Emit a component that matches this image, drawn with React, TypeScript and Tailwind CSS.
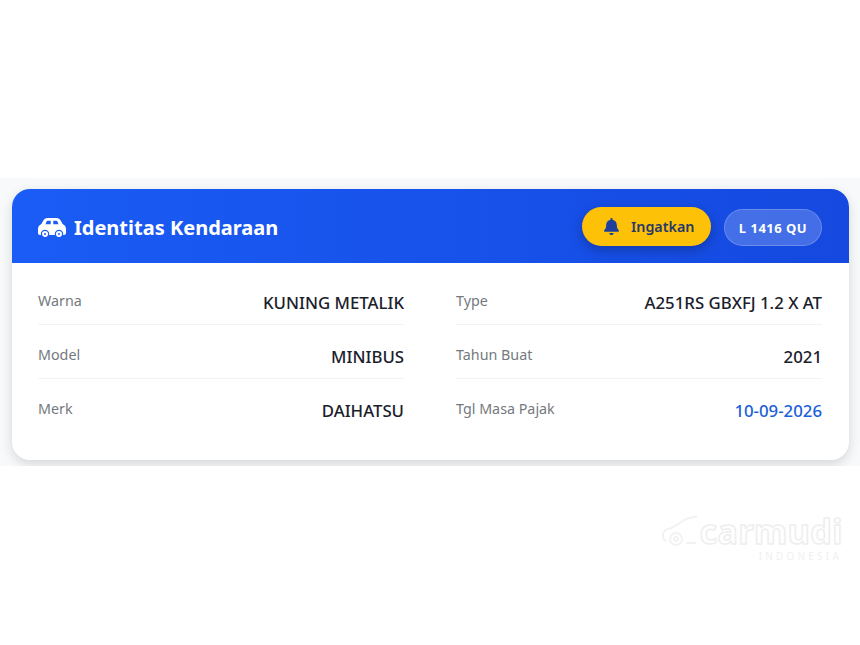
import { FaBell } from "react-icons/fa";

const left = [
  { label: "Warna", value: "KUNING METALIK" },
  { label: "Model", value: "MINIBUS" },
  { label: "Merk", value: "DAIHATSU" },
];

const right = [
  { label: "Type", value: "A251RS GBXFJ 1.2 X AT" },
  { label: "Tahun Buat", value: "2021" },
  { label: "Tgl Masa Pajak", value: "10-09-2026", accent: true },
];

type Item = { label: string; value: string; accent?: boolean };

function CarIcon() {
  return (
    <svg width="28" height="20" viewBox="0 0 28 20" fill="white">
      <path
        fillRule="evenodd"
        d="M9.5 0h9c2 0 3.2 1 4.2 2.6L24.6 6c2.2 1 3.4 2.8 3.4 5.4v3.4c0 1.4-.8 2.2-2 2.2H2c-1.2 0-2-.8-2-2.2v-3.4C0 8.800 1.200 7 3.400 6l1.900-3.400C6.300 1 7.500 0 9.500 0zM10 2.800c-.8 0-1.200.3-1.500 1L7.500 6.200h5.200V2.800zM15.300 2.800v3.400h5.200l-1-2.400c-.3-.7-.7-1-1.500-1z"
      />
      <circle cx="7" cy="16" r="3.600" stroke="#1a5cf5" strokeWidth="1.200" />
      <circle cx="21" cy="16" r="3.600" stroke="#1a5cf5" strokeWidth="1.200" />
      <circle cx="7" cy="16" r="1" fill="#1a5cf5" />
      <circle cx="21" cy="16" r="1" fill="#1a5cf5" />
    </svg>
  );
}

function Column({ items }: { items: Item[] }) {
  return (
    <div>
      {items.map((item, i) => (
        <div
          key={item.label}
          className={
            i < items.length - 1
              ? "flex h-[54px] items-start justify-between border-b border-[#f1f3f5] pt-[19px]"
              : "flex h-[54px] items-start justify-between pt-[19px]"
          }
        >
          <span className="text-[14.3px] leading-[22px] text-[#74797e]">{item.label}</span>
          <span
            className={
              item.accent
                ? "mt-[2px] text-[16.8px] leading-[22px] font-medium text-[#1d5fd8]"
                : "mt-[2px] text-[16.8px] leading-[22px] font-medium text-[#1a202c]"
            }
          >
            {item.value}
          </span>
        </div>
      ))}
    </div>
  );
}

export default function App() {
  return (
    <div className="h-[645px] w-[860px] overflow-hidden bg-white font-['Noto_Sans',sans-serif]">
      <div className="h-[178px]" />
      <div className="h-[288px] overflow-hidden bg-[#f8f9fa] px-3 pt-[11px]">
        <div className="w-[837px] rounded-[18px] bg-white shadow-[0_4px_12px_rgba(0,0,0,0.14)]">
          <div className="flex h-[74px] items-center justify-between rounded-t-[18px] bg-gradient-to-r from-[#1a5cf5] to-[#1549e0] pr-[27px] pl-[26px]">
            <div className="flex items-center gap-[8px] pt-[3px]">
              <CarIcon />
              <span className="text-[20px] leading-[28px] font-bold text-white">Identitas Kendaraan</span>
            </div>
            <div className="flex items-center gap-[13px] pt-[1px]">
              <div className="flex h-[39px] w-[129px] items-center gap-[11px] rounded-full bg-[#fdc107] pl-[21px] shadow-[0_4px_12px_rgba(0,0,0,0.25)]">
                <FaBell className="h-[17px] w-[17px] text-[#1d3f9e]" />
                <span className="text-[14.3px] font-semibold text-[#27386b]">Ingatkan</span>
              </div>
              <div className="mt-[2px] flex h-[37px] w-[98px] items-center justify-center rounded-full border border-white/20 bg-white/20 pt-[2px] text-[13px] font-bold tracking-[0.5px] text-white">
                L 1416 QU
              </div>
            </div>
          </div>
          <div className="grid h-[197px] grid-cols-2 gap-x-[52px] pt-[8px] pr-[27px] pl-[26px]">
            <Column items={left} />
            <Column items={right} />
          </div>
        </div>
      </div>
      <div className="flex justify-end pt-[47px] pr-[17px]">
        <div className="flex flex-col items-end">
          <div className="flex items-end gap-[1px]">
            <svg width="36" height="36" viewBox="0 0 36 36" fill="none" stroke="#f2f2f2" strokeWidth="2">
              <path d="M35 4c-7 0-11 1-16 5-4 3-7 5-10 6-5 1-8 3-8 7 0 3 1 5 3 6" />
              <circle cx="14" cy="26" r="6" />
              <circle cx="14" cy="26" r="2" />
              <path d="M24 30h10" />
            </svg>
            <span className="text-[34px] leading-[36px] font-bold tracking-[0.5px] text-white [-webkit-text-stroke:1.5px_#eeeeee]">
              carmudi
            </span>
          </div>
          <span className="mt-[1px] mr-[1px] text-[10px] leading-[12px] tracking-[3.2px] text-[#f0f0f0]">INDONESIA</span>
        </div>
      </div>
    </div>
  );
}
